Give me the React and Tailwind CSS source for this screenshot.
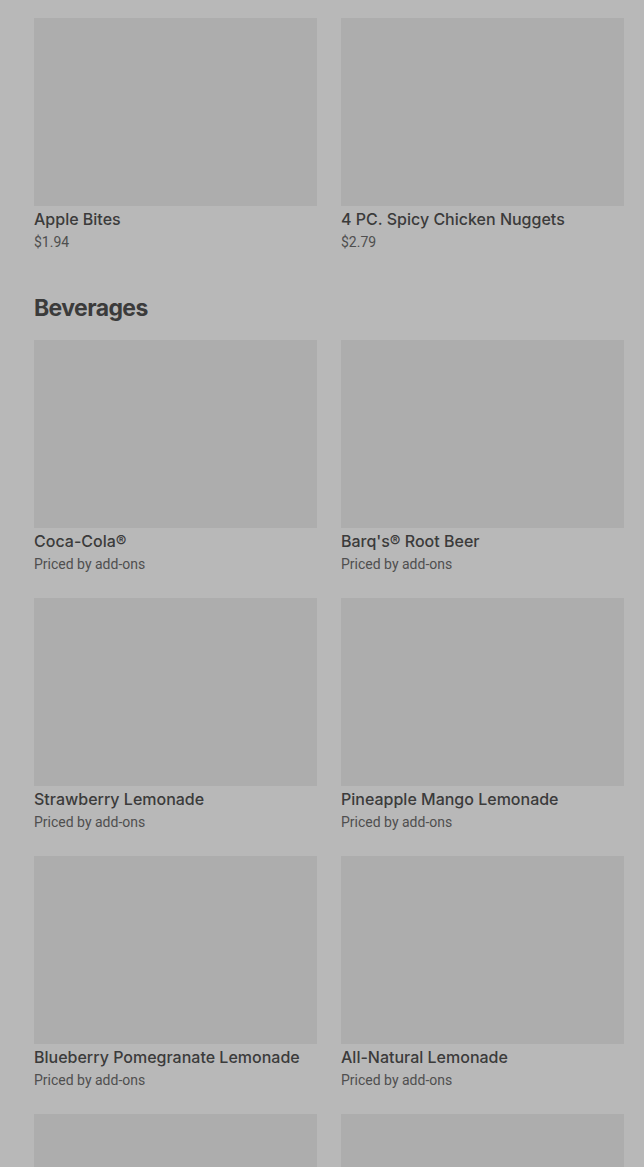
import React from "react";

const top = [
  { name: "Apple Bites", price: "$1.94" },
  { name: "4 PC. Spicy Chicken Nuggets", price: "$2.79" },
];

const bev = [
  { name: "Coca-Cola®", price: "Priced by add-ons" },
  { name: "Barq's® Root Beer", price: "Priced by add-ons" },
  { name: "Strawberry Lemonade", price: "Priced by add-ons" },
  { name: "Pineapple Mango Lemonade", price: "Priced by add-ons" },
  { name: "Blueberry Pomegranate Lemonade", price: "Priced by add-ons" },
  { name: "All-Natural Lemonade", price: "Priced by add-ons" },
  { name: null, price: null },
  { name: null, price: null },
];

function Card({ item }) {
  return (
    <div className="flex flex-col">
      <div className="h-[188px] bg-[#adadad]" />
      {item.name && (
        <>
          <div
            className="mt-[3px] text-[16px] leading-5 font-medium text-[#3b3b3b] whitespace-nowrap"
            style={{ fontFamily: "Inter, 'Liberation Sans', sans-serif" }}
          >
            {item.name}
          </div>
          <div
            className="mt-[3px] text-[14px] leading-5 text-[#4f4f4f] whitespace-nowrap"
            style={{ fontFamily: "Roboto, 'Liberation Sans', sans-serif" }}
          >
            {item.price}
          </div>
        </>
      )}
    </div>
  );
}

export default function App() {
  return (
    <div className="w-[644px] h-[1167px] overflow-hidden bg-[#b8b8b8] pl-[34px] pr-[20px] pt-[18px]">
      <div className="grid grid-cols-2 gap-x-6 gap-y-6">
        {top.map((it, i) => (
          <Card key={i} item={it} />
        ))}
      </div>
      <h2
        className="mt-[40px] mb-[16px] text-[23px] leading-8 font-bold tracking-[-0.6px] text-[#3b3b3b]"
        style={{ fontFamily: "Inter, 'Liberation Sans', sans-serif" }}
      >
        Beverages
      </h2>
      <div className="grid grid-cols-2 gap-x-6 gap-y-6">
        {bev.map((it, i) => (
          <Card key={i} item={it} />
        ))}
      </div>
    </div>
  );
}
